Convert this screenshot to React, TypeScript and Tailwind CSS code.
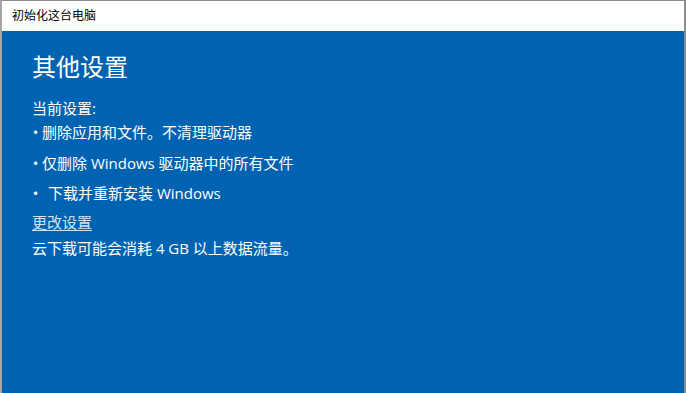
const font = { fontFamily: '"Open Sans", "Noto Sans CJK SC", "Noto Sans", sans-serif' };

const bullets = [
  { text: '删除应用和文件。不清理驱动器', gap: 'ml-[3px]', mt: 'mt-0' },
  { text: '仅删除 Windows 驱动器中的所有文件', gap: 'ml-[3px]', mt: 'mt-[7px]' },
  { text: '下载并重新安装 Windows', gap: 'ml-[9px]', mt: 'mt-[6px]' },
];

export default function App() {
  return (
    <div className="w-[686px] h-[393px] overflow-hidden bg-[#f0f0f0] flex" style={font}>
      <div className="w-[2px] bg-[#a5a5a5]" />
      <div className="flex-1 flex flex-col border-t border-[#8c8c8c]">
        <div className="h-[30px] bg-white flex items-center pl-[10px] text-[12px] text-black leading-none">
          初始化这台电脑
        </div>
        <div className="flex-1 bg-[#0063b1] text-white pl-[30px] pt-[20px]">
          <div className="h-[32px] leading-[32px] text-[24px]">其他设置</div>
          <div className="mt-[13px] h-[24px] leading-[24px] text-[15px]">当前设置:</div>
          {bullets.map((b) => (
            <div key={b.text} className={`${b.mt} h-[24px] leading-[24px] text-[15px] flex`}>
              <span className="w-[7px] flex justify-center">•</span>
              <span className={b.gap}>{b.text}</span>
            </div>
          ))}
          <div className="mt-[5px] h-[24px] leading-[24px] text-[15px] text-[#cfe2f3] underline underline-offset-2">
            更改设置
          </div>
          <div className="mt-[2px] h-[24px] leading-[24px] text-[15px]">云下载可能会消耗 4 GB 以上数据流量。</div>
        </div>
      </div>
      <div className="w-[2px] bg-[#8c8c8c]" />
    </div>
  );
}
